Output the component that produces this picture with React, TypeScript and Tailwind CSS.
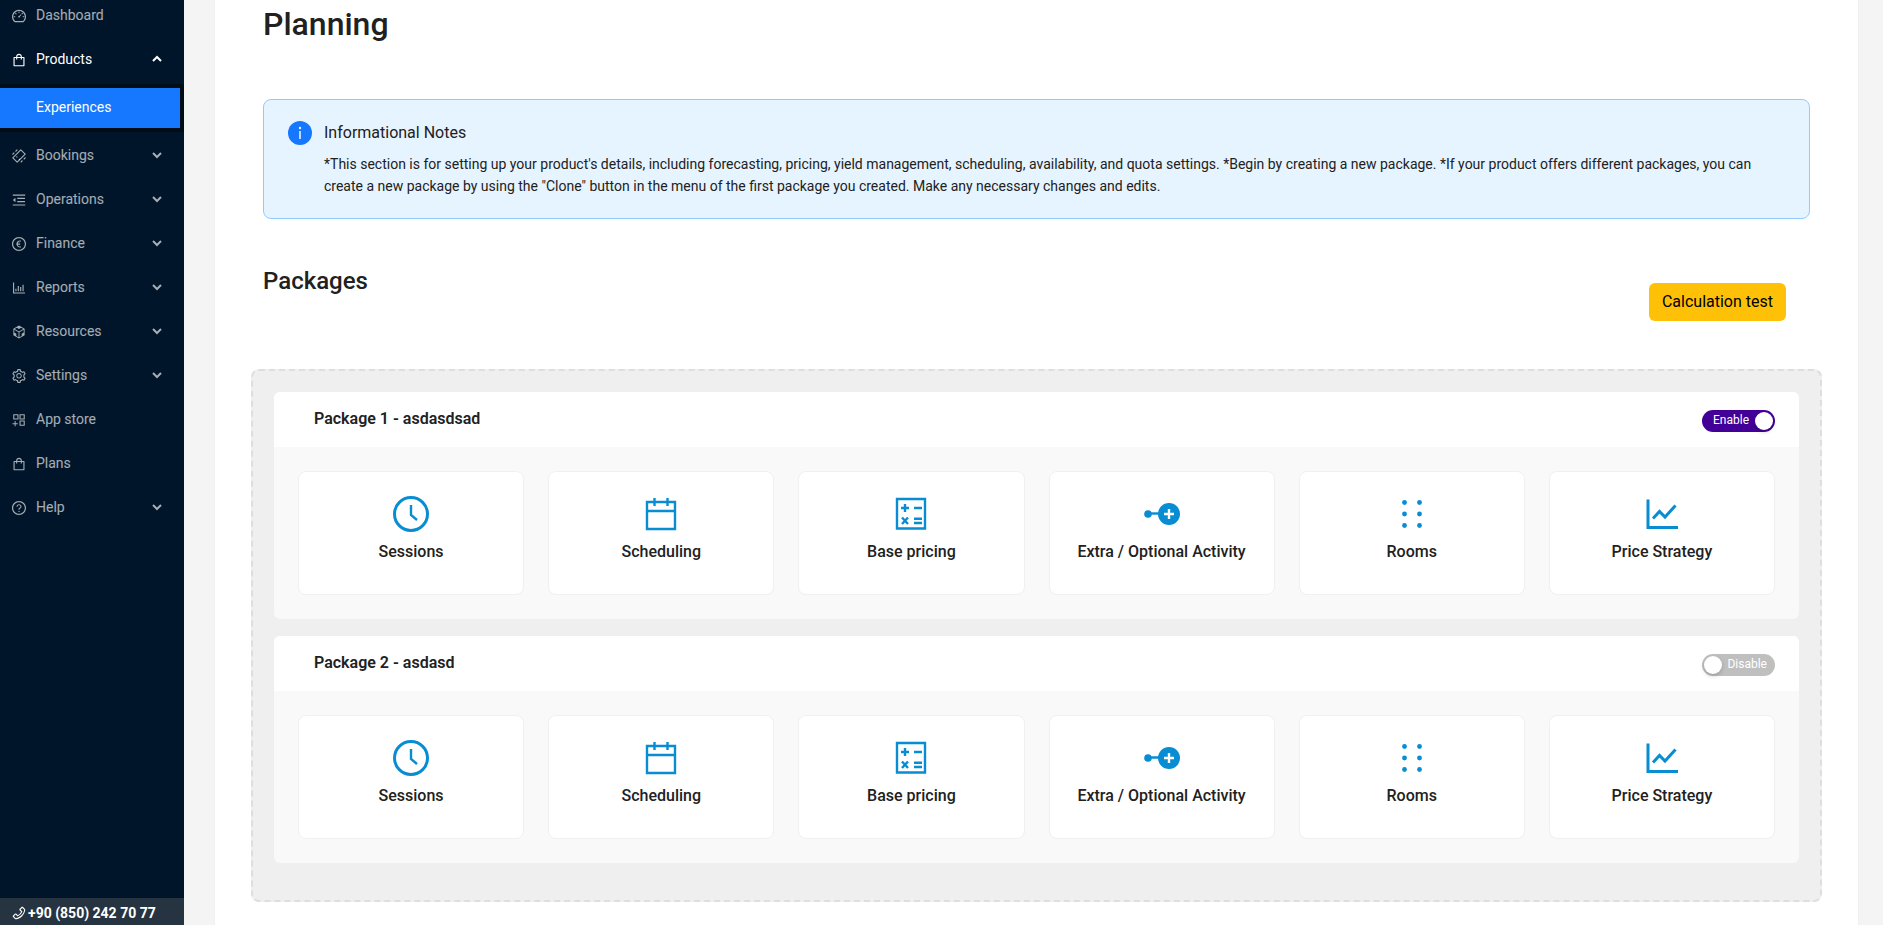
import { useState, type ReactNode } from "react";
import {
  AiOutlineAppstoreAdd,
  AiOutlineBarChart,
  AiOutlineCodeSandbox,
  AiOutlineDashboard,
  AiOutlineEuroCircle,
  AiOutlineMenuFold,
  AiOutlinePhone,
  AiOutlineQuestionCircle,
  AiOutlineSetting,
  AiOutlineShopping,
} from "react-icons/ai";

interface NavItem {
  label: string;
  icon: ReactNode;
  expandable?: boolean;
}

// Rotated ticket with motion lines
function BookingsIcon() {
  return (
    <svg width="16" height="16" viewBox="0 0 16 16" fill="none" stroke="currentColor" strokeWidth="1.1">
      <path d="M9.8 1.8 14.200 6.200 6.200 14.200 1.800 9.800z" strokeLinejoin="round" />
      <path d="M1.500 6.500l1.800-1.800M4.500 3.500l1.800-1.800M9.700 14.300l1.800-1.800M12.700 11.300l1.800-1.800" />
      <path d="M5.500 8.500l.8.800M8 11l.8.800" />
    </svg>
  );
}

const NAV_ITEMS: NavItem[] = [
  { label: "Bookings", icon: <BookingsIcon />, expandable: true },
  { label: "Operations", icon: <AiOutlineMenuFold size={16} />, expandable: true },
  { label: "Finance", icon: <AiOutlineEuroCircle size={16} />, expandable: true },
  { label: "Reports", icon: <AiOutlineBarChart size={16} />, expandable: true },
  { label: "Resources", icon: <AiOutlineCodeSandbox size={16} />, expandable: true },
  { label: "Settings", icon: <AiOutlineSetting size={16} />, expandable: true },
  { label: "App store", icon: <AiOutlineAppstoreAdd size={16} /> },
  { label: "Plans", icon: <AiOutlineShopping size={16} /> },
  { label: "Help", icon: <AiOutlineQuestionCircle size={16} />, expandable: true },
];

function Chevron({ up = false }: { up?: boolean }) {
  return (
    <svg width="10" height="8" viewBox="0 0 10 8" fill="none" stroke="currentColor" strokeWidth="2">
      <path d={up ? "M1 6l4-4 4 4" : "M1 2l4 4 4-4"} />
    </svg>
  );
}

function NavRow({ item, open = false }: { item: NavItem; open?: boolean }) {
  return (
    <button
      type="button"
      aria-expanded={item.expandable ? open : undefined}
      className={`flex h-11 w-full shrink-0 items-center pr-[22px] pl-[11px] text-left text-sm ${
        open ? "text-white" : "text-white/65"
      }`}
    >
      <span className="mt-0.5">{item.icon}</span>
      <span className="ml-[9px] flex-1">{item.label}</span>
      {item.expandable && <Chevron up={open} />}
    </button>
  );
}

function Sidebar() {
  return (
    <nav className="flex w-46 shrink-0 flex-col bg-[#001529]">
      {/* The list is scrolled a little, so the first row is cut off at the top */}
      <div className="-mt-[7px] flex min-h-0 flex-1 flex-col overflow-hidden">
        <NavRow item={{ label: "Dashboard", icon: <AiOutlineDashboard size={16} /> }} />
        <NavRow item={{ label: "Products", icon: <AiOutlineShopping size={16} />, expandable: true }} open />
        <div className="mt-[3px] mb-px bg-[#000c17] py-1 pr-1">
          <a href="#experiences" className="flex h-10 items-center bg-[#1677ff] pb-0.5 pl-9 text-sm text-white">
            Experiences
          </a>
        </div>
        {NAV_ITEMS.map((item) => (
          <NavRow key={item.label} item={item} />
        ))}
      </div>
      <a
        href="tel:+908502427077"
        className="flex h-[27px] items-center gap-px bg-[#263442] pt-0.5 pl-[11px] text-sm font-bold text-white"
      >
        <AiOutlinePhone size={16} />
        +90 (850) 242 70 77
      </a>
    </nav>
  );
}

function ClockIcon() {
  return (
    <svg width="36" height="36" viewBox="0 0 36 36" fill="none" stroke="currentColor">
      <circle cx="18" cy="18" r="16.5" strokeWidth="3" />
      <path d="M18 9v10l6 5" strokeWidth="2.4" />
    </svg>
  );
}

function CalendarIcon() {
  return (
    <svg width="36" height="36" viewBox="0 0 36 36" fill="none" stroke="currentColor" strokeWidth="2.4">
      <path d="M4 6h28v27H4zM4 15h28M11.5 2v8M24.5 2v8" />
    </svg>
  );
}

function CalculatorIcon() {
  return (
    <svg width="36" height="36" viewBox="0 0 36 36" fill="none" stroke="currentColor" strokeWidth="2.4">
      <path d="M4 3h28v29.500H4z" />
      <path d="M8 12h8M12 8v8M21 12h8M21 22.800h8M21 27h8" />
      <path d="M9 21.500l6 6.500M15 21.500l-6 6.500" />
    </svg>
  );
}

function ExtraIcon() {
  return (
    <svg width="36" height="36" viewBox="0 0 36 36">
      <circle cx="4" cy="18" r="3.8" fill="currentColor" />
      <path d="M4 17.500h14" stroke="currentColor" strokeWidth="2.4" />
      <circle cx="25" cy="18" r="11" fill="currentColor" />
      <path d="M20 18h10M25 13v10" stroke="#fff" strokeWidth="2.4" />
    </svg>
  );
}

function RoomsIcon() {
  return (
    <svg width="36" height="36" viewBox="0 0 36 36" fill="currentColor">
      {[6.5, 18, 29.5].map((y) => (
        <g key={y}>
          <circle cx="10.5" cy={y} r="2.4" />
          <circle cx="25.5" cy={y} r="2.4" />
        </g>
      ))}
    </svg>
  );
}

function StrategyIcon() {
  return (
    <svg width="36" height="36" viewBox="0 0 36 36" fill="none" stroke="currentColor" strokeWidth="3">
      <path d="M4 3.500v28h30" />
      <path d="M9 22.500l6.500-7 5.500 5.500 10.500-11.500" />
    </svg>
  );
}

const TILES = [
  { label: "Sessions", Icon: ClockIcon },
  { label: "Scheduling", Icon: CalendarIcon },
  { label: "Base pricing", Icon: CalculatorIcon },
  { label: "Extra / Optional Activity", Icon: ExtraIcon },
  { label: "Rooms", Icon: RoomsIcon },
  { label: "Price Strategy", Icon: StrategyIcon },
];

function Toggle({ defaultOn, name }: { defaultOn: boolean; name: string }) {
  const [on, setOn] = useState(defaultOn);

  return (
    <button
      type="button"
      role="switch"
      aria-checked={on}
      aria-label={name}
      onClick={() => setOn(!on)}
      className={`mt-0.5 flex h-[22px] w-[73px] items-center justify-between rounded-full text-xs text-white ${
        on ? "bg-[#430098] pr-0.5 pl-[11px]" : "flex-row-reverse bg-[#bfbfbf] pr-2 pl-0.5"
      }`}
    >
      <span className="pb-0.5">{on ? "Enable" : "Disable"}</span>
      <span className="size-[18px] rounded-full bg-white shadow-[0_2px_4px_rgba(0,35,11,0.2)]" />
    </button>
  );
}

function PackageCard({ title, enabled }: { title: string; enabled: boolean }) {
  return (
    <section className="overflow-hidden rounded-md bg-[#f9f9f9]">
      <header className="flex h-[55px] items-center justify-between bg-white pr-6 pl-10">
        <h3 className="pb-0.5 text-base font-semibold">{title}</h3>
        <Toggle defaultOn={enabled} name={title} />
      </header>
      <div className="grid grid-cols-6 gap-6 p-6">
        {TILES.map(({ label, Icon }) => (
          <button
            key={label}
            type="button"
            className="flex h-[124px] flex-col items-center rounded-lg border border-[#f0f0f0] bg-white pt-6 text-base font-medium"
          >
            <span className="text-[#088cd2]">
              <Icon />
            </span>
            <span className="mt-2">{label}</span>
          </button>
        ))}
      </div>
    </section>
  );
}

export default function App() {
  return (
    <div className="flex h-screen overflow-hidden bg-[#f4f4f4] font-[Roboto,sans-serif] text-[#212121]">
      <Sidebar />
      <main className="mr-6 ml-[30px] flex-1 overflow-hidden border-x border-[#f0f0f0] bg-white px-9 pb-6">
        <h1 className="mx-3 pt-1 text-[32px] leading-10 font-medium">Planning</h1>

        <div className="mx-3 mt-[55px] flex gap-3 rounded-lg border border-[#91caff] bg-[#e6f4ff] px-6 py-5">
          <svg className="mt-px shrink-0" width="24" height="24" viewBox="0 0 24 24" role="img" aria-label="Info">
            <circle cx="12" cy="12" r="12" fill="#1677ff" />
            <path d="M12 10v8" stroke="#e6f4ff" strokeWidth="1.6" />
            <circle cx="12" cy="7" r="1.2" fill="#e6f4ff" />
          </svg>
          <div className="pt-px pb-px">
            <h2 className="text-base">Informational Notes</h2>
            <p className="mt-2 text-sm leading-[22px]">
              *This section is for setting up your product's details, including forecasting, pricing, yield
              management, scheduling, availability, and quota settings. *Begin by creating a new package. *If your
              product offers different packages, you can create a new package by using the "Clone" button in the menu
              of the first package you created. Make any necessary changes and edits.
            </p>
          </div>
        </div>

        <div className="mt-11 mr-9 ml-3 flex items-start justify-between">
          <h2 className="pt-0.5 text-2xl font-medium">Packages</h2>
          <button
            type="button"
            className="mt-5 h-[38px] rounded-md bg-[#ffc107] px-[13px] text-base text-black"
          >
            Calculation test
          </button>
        </div>

        <div className="mt-12 flex flex-col gap-[17px] rounded-lg border-2 border-dashed border-[#dedede] bg-[#efefef] px-[21px] pt-[21px] pb-[37px]">
          <PackageCard title="Package 1 - asdasdsad" enabled />
          <PackageCard title="Package 2 - asdasd" enabled={false} />
        </div>
      </main>
    </div>
  );
}
